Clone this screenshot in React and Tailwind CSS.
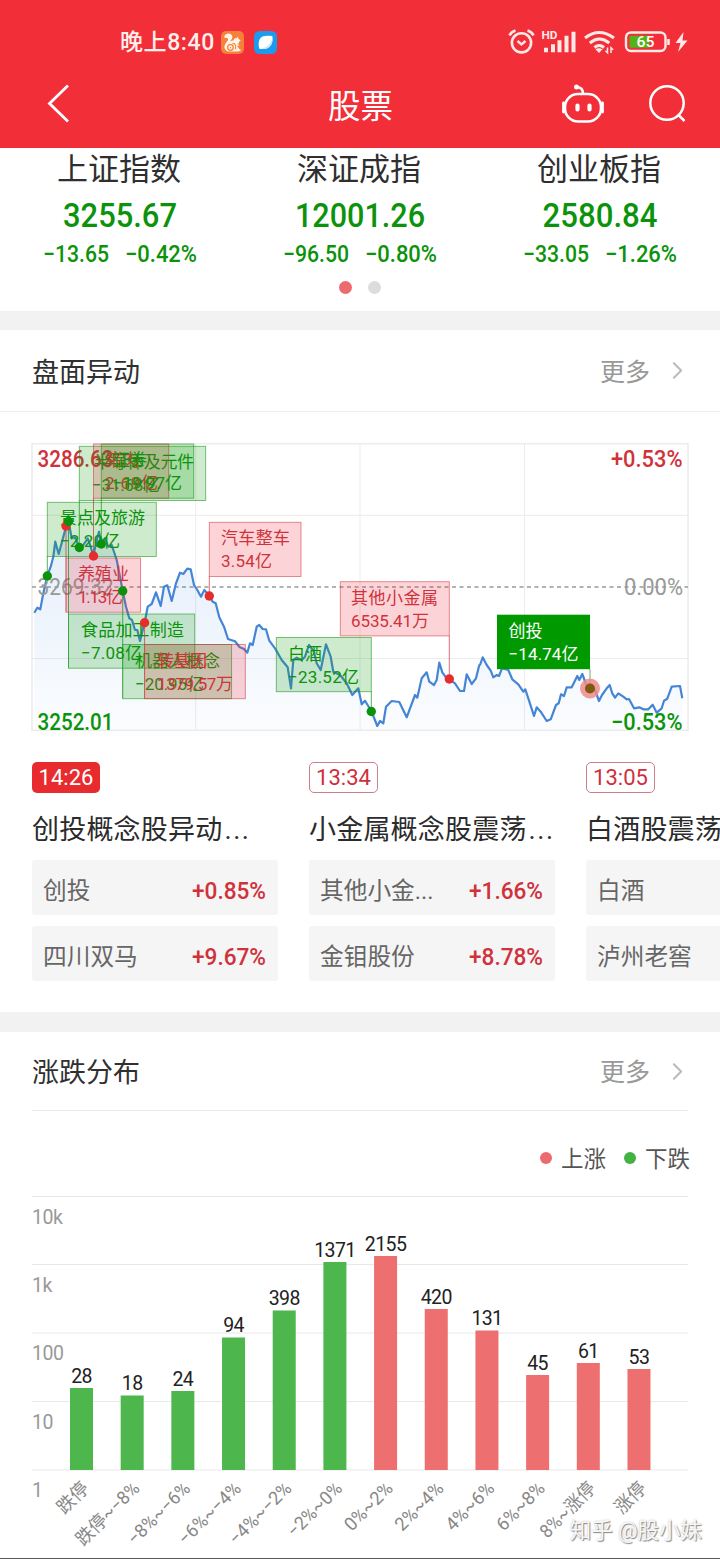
import { ChevronRight } from 'lucide-react'

const GREEN = '#0b930b'
const RED = '#d0323c'

const indices = [
  { name: '上证指数', value: '3255.67', w: 114, diff: '−13.65', pct: '−0.42%' },
  { name: '深证成指', value: '12001.26', w: 130, diff: '−96.50', pct: '−0.80%' },
  { name: '创业板指', value: '2580.84', w: 115, diff: '−33.05', pct: '−1.26%' },
]

// Intraday line, one entry per block: [x offset, points], three units per pixel
const trend = [
  [60, '43,548 52,533 61,538 70,490 82,437 92,410 100,380 106,335 116,372 126,335 138,290 145,270 155,325 165,322 178,352 190,345 203,325 212,350 220,378 230,330 237,305 243,340 255,325 265,350 275,345 290,390 300,440 308,483 318,530 328,565 336,570 345,600 352,600 360,633 374,577 383,530 395,522 408,487 422,528 432,470 442,466 455,513 468,460 480,428 490,432 502,416 512,418 522,465 532,480 543,500 553,480 568,497 578,515 587,520 598,562 612,590 624,627 645,634 658,650'],
  [720, '0,652 12,657 22,668 30,640 38,645 50,590 58,585 68,597 78,598 88,632 105,655 125,690 143,712 153,775 160,690 170,683 185,690 195,680 207,645 222,665 230,700 242,720 258,643 272,680 280,725 300,735 320,760 337,795 355,775 365,823 375,812 394,843 412,888 420,873 430,880 438,830 455,813 478,816 500,862 525,795 532,803 545,745 560,727 568,755 582,765 590,750 598,698 607,727 620,745 628,748 645,760 660,783 672,783 680,733 695,762 708,745 718,705'],
  [1440, '0,705 8,682 20,705 32,722 40,742 50,735 57,738 66,715 85,720 97,748 115,763 130,785 136,778 145,805 162,858 170,832 182,845 200,873 212,868 228,825 236,820 243,793 252,798 260,772 275,772 292,738 298,750 307,732 318,762 330,775 345,780 357,813 366,795 380,775 389,765 397,790 405,803 415,790 430,800 440,808 447,807 462,835 478,832 490,838 505,838 518,824 530,848 545,835 552,812 562,806 575,770 600,768 607,805'],
]

const linePoints = trend
  .flatMap(([dx, pts]) =>
    pts.split(' ').map((p) => {
      const [x, y] = p.split(',').map(Number)
      return `${((x + dx) / 3).toFixed(1)},${(y / 3).toFixed(1)}`
    }),
  )
  .join(' ')

// x, y, w = flag box; px, py = marked point on the line; tx = text start, w1/w2 = text widths
const flags = [
  { x: 79.3, y: 16.3, w: 126.4, px: 79.3, py: 117.5, tx: 94, a: '半导体及元件', w1: 100, b: '−31.68亿', w2: 68, bx: 92, up: false },
  { x: 93.5, y: 14, w: 75.2, px: 93.5, py: 126, tx: 105, a: '猪肉', w1: 34, b: '2.69亿', w2: 53, up: true },
  { x: 101.3, y: 14, w: 92.4, px: 101.3, py: 114, tx: 113, a: '证券', w1: 34, b: '−19.97亿', w2: 69, up: false },
  { x: 47.3, y: 72.3, w: 109, px: 47.3, py: 146, tx: 60, a: '景点及旅游', w1: 85, b: '−2.20亿', w2: 60, up: false },
  { x: 66, y: 128, w: 74.5, px: 66, py: 96, tx: 78, a: '养殖业', w1: 51, b: '1.13亿', w2: 45, up: true },
  { x: 68.5, y: 184, w: 126.2, px: 68.5, py: 91.5, tx: 81, a: '食品加工制造', w1: 103, b: '−7.08亿', w2: 61, up: false },
  { x: 122.7, y: 214.5, w: 108.9, px: 122.7, py: 161, tx: 135, a: '机器人概念', w1: 85, b: '−20.95亿', w2: 69, up: false },
  { x: 144.6, y: 214.5, w: 100.7, px: 144.6, py: 192.7, tx: 157, a: '转基因', w1: 50, b: '1379.57万', w2: 76, up: true },
  { x: 209.3, y: 92.3, w: 91.7, px: 209.3, py: 166, tx: 221, a: '汽车整车', w1: 69, b: '3.54亿', w2: 51, up: true },
  { x: 276.3, y: 207.5, w: 95, px: 371.3, py: 281.5, tx: 288, a: '白酒', w1: 34, b: '−23.52亿', w2: 71, up: false },
  { x: 340.3, y: 151.7, w: 109, px: 449.3, py: 249, tx: 351, a: '其他小金属', w1: 87, b: '6535.41万', w2: 78, up: true },
]

const news = [
  { time: '14:26', title: '创投概念股异动', more: true, active: true, rows: [['创投', '+0.85%'], ['四川双马', '+9.67%']] },
  { time: '13:34', title: '小金属概念股震荡', more: true, rows: [['其他小金...', '+1.66%'], ['金钼股份', '+8.78%']] },
  { time: '13:05', title: '白酒股震荡', rows: [['白酒'], ['泸州老窖']] },
]

const bars = [
  { v: 28, h: 82, label: '跌停', len: 36 },
  { v: 18, h: 74.5, label: '跌停~−8%', len: 81 },
  { v: 24, h: 79, label: '−8%~−6%', len: 80 },
  { v: 94, h: 132.5, label: '−6%~−4%', len: 80 },
  { v: 398, h: 159.5, label: '−4%~−2%', len: 80 },
  { v: 1371, h: 208, label: '−2%~0%', len: 69 },
  { v: 2155, h: 214, label: '0%~2%', len: 60, up: true },
  { v: 420, h: 161, label: '2%~4%', len: 60, up: true },
  { v: 131, h: 139.5, label: '4%~6%', len: 60, up: true },
  { v: 45, h: 95, label: '6%~8%', len: 60, up: true },
  { v: 61, h: 107, label: '8%~涨停', len: 70, up: true },
  { v: 53, h: 101, label: '涨停', len: 36, up: true },
]

function StatusIcons() {
  return (
    <svg width="184" height="30" viewBox="506 27 184 30" fill="none" stroke="#ffe9e6">
      {/* alarm */}
      <circle cx="521.5" cy="42.800" r="9.600" strokeWidth="2.600" />
      <path d="M517.500 41l4 3.500 4-3.500" strokeWidth="2.400" />
      <path d="M509.500 35.500q1.500-3.500 6-5M533.500 35.500q-1.500-3.500-6-5" strokeWidth="2.600" />
      {/* signal */}
      <text x="541.500" y="38.800" fontFamily="Roboto" fontSize="10.500" fontWeight="700" fill="#ffe9e6" stroke="none" textLength="16" lengthAdjust="spacingAndGlyphs">HD</text>
      <path d="M546 52.200v-4.500M553 52.200v-8M559.500 52.200v-12M566.500 52.200v-16.500M573.500 52.200v-20.500" strokeWidth="4" />
      {/* wifi */}
      <path d="M585 38q14-11 29 0M589.800 43q9.500-8 19.500 0M594.500 47.500q4.800-4 9.500 0" strokeWidth="3.100" />
      <path d="M595.500 49.300q3.500-2.200 7 0l-3.500 3.700z" fill="#ffe9e6" stroke="none" />
      <path d="M607.500 47.500v5.200l-2-2M611 53v-5.200l2.200 2" strokeWidth="1.500" />
      {/* battery */}
      <rect x="626" y="32.500" width="39.500" height="18.500" rx="5" strokeWidth="2.400" />
      <rect x="629.500" y="35.800" width="20" height="12" rx="1.500" fill="#52b415" stroke="none" />
      <path d="M668.500 39v6" strokeWidth="2.600" />
      <text x="636.500" y="47" fontFamily="Roboto" fontSize="14.500" fontWeight="500" fill="#fff" stroke="none" textLength="18" lengthAdjust="spacingAndGlyphs">65</text>
      <path d="M683.500 32l-8 11h5l-2.500 9 9.500-11.500h-5z" fill="#ffe9e6" stroke="none" />
    </svg>
  )
}

function SquirrelIcon() {
  return (
    <svg width="23" height="23" viewBox="0 0 23 23">
      <rect width="23" height="23" rx="5" fill="#f5813a" />
      <path d="M4 4c2-2.200 6-2.400 7.200 1 .8 2.500-1.500 4.200-2.200 5.800 1-.8 2.200-1.300 3.400-1.200.3-1.700 1.500-2.700 3-2.600L17 5.800l.2 1.800 2.500 1.800-1.800 1.300c.8 1.200-.4 2-1.500 2l2.300 1.800-2.600.2c1.200 1.800 1.800 3.600 4 4.300-1 1.500-3 1.500-4.300 1.500H8c-3.500-.2-5-3-4.400-5.800C4.200 12 7.800 9.600 7 7.800 6.400 6.500 4.500 7.200 3 6.200z" fill="#fff4e8" />
      <circle cx="9.500" cy="16.500" r="2.800" fill="none" stroke="#f5813a" strokeWidth="1.300" />
      <circle cx="9.500" cy="16.800" r="0.800" fill="#f5813a" />
      <path d="M11.500 12.300c3 .2 4 2.700 2.800 6" fill="none" stroke="#f5813a" strokeWidth="1.100" />
    </svg>
  )
}

function BrowserIcon() {
  return (
    <svg width="23" height="23" viewBox="0 0 23 23">
      <rect width="23" height="23" rx="5.500" fill="#1b9bee" />
      <path d="M5.500 8.500C7.500 4.500 12 4.200 18.300 5c1 5-.4 8.500-3 11-2.800 2.200-6 2.300-10 1.800-1-3.500-.8-6.800.2-9.300z" fill="#fff" />
      <path d="M18.400 9c-.3 3.500-1 5.500-3.100 7-2.300 2-4.500 2.300-7.800 2C12.500 16.500 15.500 13.500 18.400 9z" fill="#c9e6fb" />
    </svg>
  )
}

function Header() {
  return (
    <header className="h-[148px] shrink-0 bg-[#f22e39] text-white">
      <div className="flex h-[57px] items-end justify-between pl-[120px] pr-[30px]">
        <div className="flex h-[30px] items-center">
          <span className="w-[101px] whitespace-nowrap pt-0.5 text-[23px] font-medium tracking-[0.6px] text-[#fff0ec]">晚上8:40</span>
          <SquirrelIcon />
          <span className="ml-[10px]"><BrowserIcon /></span>
        </div>
        <StatusIcons />
      </div>
      <div className="flex h-[91px] items-center justify-between pl-[46px] pr-[33px]">
        <svg width="24" height="40" viewBox="0 0 24 40" fill="none" stroke="#fff" strokeWidth="2.800">
          <path d="M22 2.500L3.500 20.500 22 38.500" />
        </svg>
        <h1 className="ml-[90px] mt-[8px] text-[32.5px] leading-10">股票</h1>
        <div className="flex items-center gap-[42px]">
          <svg width="44" height="40" viewBox="0 0 44 40" fill="none" stroke="#fff" strokeWidth="2.600">
            <rect x="4" y="11" width="36" height="27.500" rx="13" />
            <path d="M2.500 20v9M41.500 20v9" strokeWidth="2.800" strokeLinecap="round" />
            <path d="M22 10.500c0-4.500-2.500-6.500-7-6.500" />
            <circle cx="15.500" cy="4" r="2.500" fill="#fff" stroke="none" />
            <path d="M16.500 22.500v4M28.500 22.500v4" strokeWidth="4.200" strokeLinecap="round" />
          </svg>
          <svg width="40" height="40" viewBox="0 0 40 40" fill="none" stroke="#fff" strokeWidth="2.500">
            <circle cx="20" cy="20" r="16.700" />
            <path d="M31 31.500l6.500 6.500" />
          </svg>
        </div>
      </div>
    </header>
  )
}

function IndexCard({ item }) {
  return (
    <div className="flex w-[240px] flex-col items-center">
      <div className="h-[44px] pr-[2px] pt-[2px] text-[31px] leading-[39px] text-[#2f2f2f]">{item.name}</div>
      <svg width="160" height="82" viewBox="0 0 160 82" fill={GREEN} fontFamily="Roboto" fontWeight="500">
        <text x="80" y="35" fontSize="33.500" textAnchor="middle" textLength={item.w} lengthAdjust="spacingAndGlyphs">{item.value}</text>
        <text x="3" y="70" fontSize="23.500" textLength="66" lengthAdjust="spacingAndGlyphs">{item.diff}</text>
        <text x="85" y="70" fontSize="23.500" textLength="72" lengthAdjust="spacingAndGlyphs">{item.pct}</text>
      </svg>
    </div>
  )
}

function SectionHeader({ title }) {
  return (
    <div className="flex h-full items-center justify-between px-[32px]">
      <h2 className="pt-1 text-[27px] leading-10 text-[#303030]">{title}</h2>
      <div className="flex items-center text-[25px] leading-10 text-[#999]">
        <span className="pt-1">更多</span>
        <ChevronRight size={29} strokeWidth={1.7} className="ml-[13px] -mr-[4px] text-[#bbb]" />
      </div>
    </div>
  )
}

function Flag({ f }) {
  const color = f.up ? RED : GREEN
  return (
    <g>
      <rect x={f.x} y={f.y} width={f.w} height="54.200" fill={f.up ? '#ee2a38' : '#0a9a0a'} fillOpacity="0.2" stroke={color} strokeOpacity="0.6" strokeWidth="0.900" />
      <path d={`M${f.px} ${f.py > f.y ? f.y + 54 : f.y}V${f.py}`} stroke={color} strokeOpacity="0.7" />
      {f.py > f.y ? null : <path d={`M${f.px} ${f.y}v54`} stroke={color} strokeOpacity="0.5" />}
      <text x={f.tx} y={f.y + 22} fill={color} textLength={f.w1}>{f.a}</text>
      <text x={f.bx ?? f.tx} y={f.y + 45} fill={color} textLength={f.w2}>{f.b}</text>
    </g>
  )
}

function TrendChart() {
  return (
    <svg width="720" height="310" viewBox="0 0 720 310" fill="none" className="block">
      <defs>
        <linearGradient id="area" x1="0" y1="90" x2="0" y2="300" gradientUnits="userSpaceOnUse">
          <stop offset="0" stopColor="#3d85e0" stopOpacity="0.15" />
          <stop offset="1" stopColor="#3d85e0" stopOpacity="0.02" />
        </linearGradient>
      </defs>
      <g stroke="#ececec">
        <rect x="32" y="13.700" width="656" height="286.600" strokeWidth="1.500" />
        <path d="M32 85.300h656M32 228.600h656M195.700 14v286M360 14v286M524.500 14v286" />
      </g>
      <path d="M32 157h656" stroke="#999" strokeWidth="1.300" strokeDasharray="4 3.500" />
      <polygon points={`34.300,300 ${linePoints} 682.300,300`} fill="url(#area)" />
      <polyline points={linePoints} stroke="#4585d6" strokeWidth="2.200" strokeLinejoin="round" />

      {/* axis labels */}
      <g fontFamily="Roboto" fontSize="23.500" fontWeight="500">
        <text x="37.500" y="36.500" fill={RED} textLength="76" lengthAdjust="spacingAndGlyphs">3286.63</text>
        <text x="37.500" y="165" fill="#999" fontWeight="400" textLength="76" lengthAdjust="spacingAndGlyphs">3269.32</text>
        <text x="37.500" y="299.500" fill={GREEN} textLength="76" lengthAdjust="spacingAndGlyphs">3252.01</text>
        <text x="611" y="36.500" fill={RED} textLength="71.500" lengthAdjust="spacingAndGlyphs">+0.53%</text>
        <text x="624" y="165" fill="#999" fontWeight="400" textLength="59" lengthAdjust="spacingAndGlyphs">0.00%</text>
        <text x="611" y="299.500" fill={GREEN} textLength="71.500" lengthAdjust="spacingAndGlyphs">−0.53%</text>
      </g>

      <g fontSize="17">
        {flags.map((f) => <Flag key={f.a} f={f} />)}
      </g>
      {flags.map((f) => (
        <circle key={f.a} cx={f.px} cy={f.py} r="4.700" fill={f.up ? '#e62d2d' : '#0a930a'} />
      ))}

      {/* selected event */}
      <rect x="497" y="184.700" width="93" height="54.500" fill="#009a00" />
      <path d="M590 239v20" stroke="#6fae6f" />
      <circle cx="590" cy="258.500" r="10" fill="#f08b8b" fillOpacity="0.85" />
      <circle cx="590" cy="258.500" r="5" fill="#7d5a10" />
      <g fill="#fff" fontSize="17">
        <text x="508.500" y="207">创投</text>
        <text x="508.500" y="230" textLength="70">−14.74亿</text>
      </g>
    </svg>
  )
}

function NewsCard({ item }) {
  return (
    <article className="w-[246px] shrink-0">
      <div className={item.active
        ? 'flex h-[31px] w-[68px] items-center justify-center rounded-[5px] bg-[#e82b2f] text-[22px] text-white'
        : 'flex h-[31px] w-[69px] items-center justify-center rounded-[5px] border border-[#c98088] text-[22px] text-[#cf2f3c]'}
      >
        <span>{item.time}</span>
      </div>
      <h3 className="mt-[17px] whitespace-nowrap text-[27px] leading-10 tracking-[0.2px] text-[#2b2b2b]">
        {item.title}
        {item.more && <span className="ml-[2px] tracking-[1.6px]">...</span>}
      </h3>
      <div className="mt-[10px] flex flex-col gap-[11px]">
        {item.rows.map(([name, pct]) => (
          <div key={name} className="flex h-[55px] items-center justify-between rounded-[3px] bg-[#f5f5f5] px-[11px]">
            <span className="pt-1.5 text-[23.7px] leading-8 text-[#666]">{name}</span>
            {pct && (
              <svg width="76" height="32" viewBox="0 0 76 32" className="mt-1.5">
                <text x="1" y="23.500" fontFamily="Roboto" fontSize="23.500" fontWeight="500" fill={RED} textLength="74" lengthAdjust="spacingAndGlyphs">{pct}</text>
              </svg>
            )}
          </div>
        ))}
      </div>
    </article>
  )
}

function DistributionChart() {
  const base = 290
  return (
    <svg width="720" height="379" viewBox="0 0 720 379" className="block">
      <path d="M32 16.500h656M32 84.500h656M32 153h656M32 221.500h656M32 290h656" stroke="#e8e8e8" fill="none" />
      <g fill="#999" fontSize="19.500" letterSpacing="-0.5">
        {['10k', '1k', '100', '10', '1'].map((t, i) => (
          <text key={t} x="32" y={43.5 + i * 68.4}>{t}</text>
        ))}
      </g>
      {bars.map((b, i) => {
        const x = 70 + i * 50.68
        const cx = x + 11.5
        return (
          <g key={b.label}>
            <rect x={x} y={base - b.h} width="23" height={b.h} fill={b.up ? '#ee6f6f' : '#4db64c'} />
            <text x={cx} y={base - b.h - 5.5} fontSize="19.500" letterSpacing="-0.6" fill="#222" textAnchor="middle">{b.v}</text>
            <text
              transform={`translate(${cx + 8.5} ${base + 19.5}) rotate(-45)`}
              textAnchor="end"
              fontSize="18.500"
              fill="#888"
              textLength={b.len}
              lengthAdjust="spacingAndGlyphs"
            >
              {b.label}
            </text>
          </g>
        )
      })}
    </svg>
  )
}

export default function App() {
  return (
    <div className="flex h-[1560px] w-[720px] flex-col overflow-hidden bg-white font-['Roboto','Noto_Sans_CJK_SC',sans-serif]">
      <Header />

      <section className="h-[163px] shrink-0">
        <div className="flex">
          {indices.map((item) => <IndexCard key={item.name} item={item} />)}
        </div>
        <div className="mt-[7px] flex justify-center gap-4">
          <span className="size-[13px] rounded-full bg-[#ec6b6e]" />
          <span className="size-[13px] rounded-full bg-[#dcdcdc]" />
        </div>
      </section>
      <div className="h-[19px] shrink-0 bg-[#f2f2f2]" />

      <section className="h-[682px] shrink-0">
        <div className="h-[82px] border-b border-[#ececec]">
          <SectionHeader title="盘面异动" />
        </div>
        <div className="pt-[18px]">
          <TrendChart />
        </div>
        <div className="mt-[22px] flex gap-[31px] pl-[32px]">
          {news.map((item) => <NewsCard key={item.time} item={item} />)}
        </div>
      </section>
      <div className="h-[20px] shrink-0 bg-[#f2f2f2]" />

      <section className="relative shrink-0">
        <div className="h-[78px]">
          <SectionHeader title="涨跌分布" />
        </div>
        <div className="mx-[32px] border-t border-[#e8e8e8]" />
        <div className="flex h-[69px] items-end justify-end pb-[3px] pr-[30px] text-[22.5px] leading-[38px] text-[#555]">
          <span className="mb-[13px] mr-[9px] size-[12px] rounded-full bg-[#ec6b6e]" />
          <span className="-mb-px">上涨</span>
          <span className="mb-[13px] ml-[18px] mr-[9px] size-[12px] rounded-full bg-[#43b244]" />
          <span className="-mb-px">下跌</span>
        </div>
        <DistributionChart />
        <span className="absolute bottom-[12px] right-[18px] text-[21.5px] leading-8 text-white/90 [text-shadow:1px_1px_1px_#888,0_0_2px_#bbb]">知乎 @股小妹</span>
        <div className="absolute inset-x-0 bottom-0 h-px bg-[#5a5a5a]" />
      </section>
    </div>
  )
}
